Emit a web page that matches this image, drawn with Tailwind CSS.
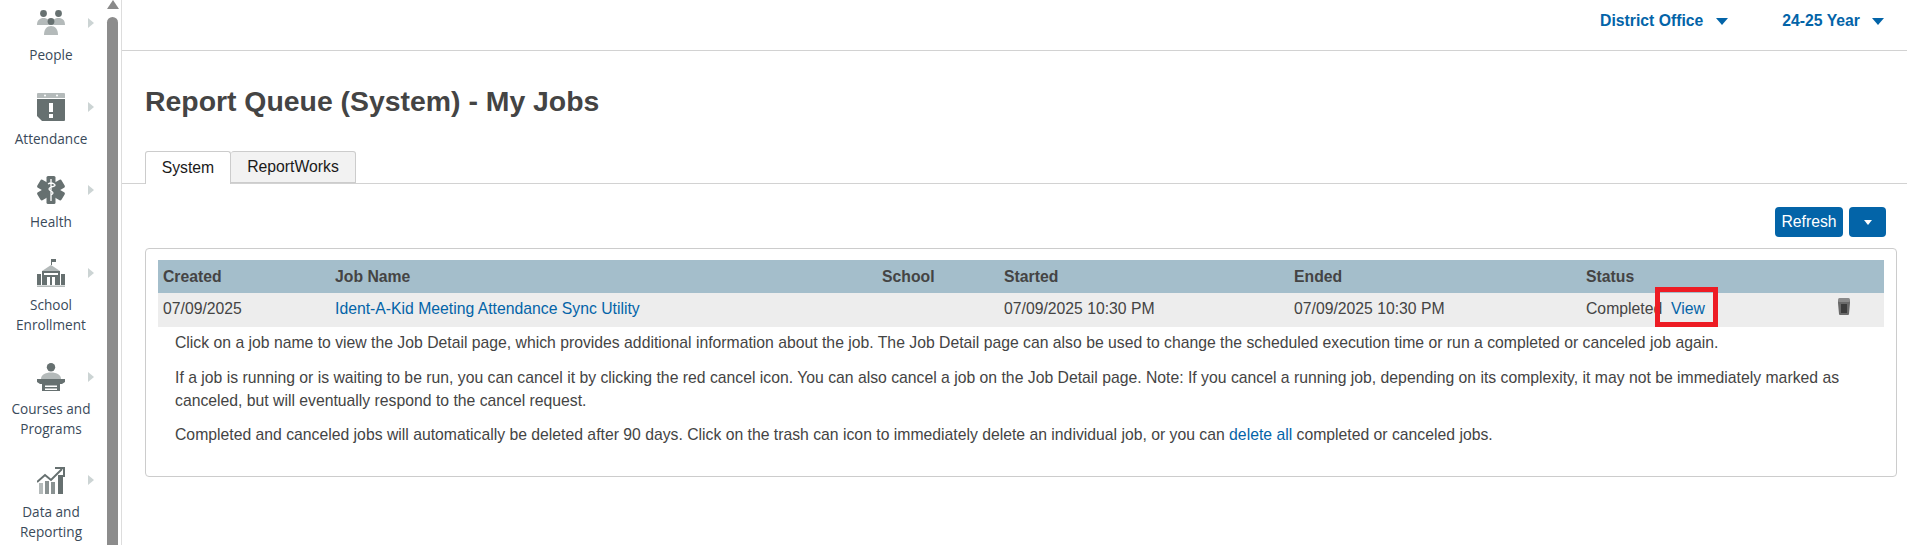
<!DOCTYPE html>
<html lang="en">
<head>
  <meta charset="UTF-8">
  <title>Report Queue (System) - My Jobs</title>
  <script src="https://cdn.jsdelivr.net/npm/@tailwindcss/browser@4"></script>
</head>
<body class="bg-white overflow-hidden font-['Liberation_Sans',sans-serif] text-[15.75px] text-[#444]">
  <div class="flex h-[545px] overflow-hidden">
    <!-- Sidebar -->
    <div class="w-[107px] shrink-0 overflow-hidden font-['Open_Sans',sans-serif] text-[13.6px] leading-[20px] text-[#3a4a5a] text-center">
      <div class="relative h-[83px] w-[102px] pt-[10px]">
        <svg class="mx-auto block" width="28" height="26" viewBox="0 0 28 26"><circle cx="6.500" cy="3.500" r="3.400" fill="#667070"/><circle cx="21.500" cy="3.500" r="3.400" fill="#667070"/><path d="M0 15c0-5 3-7 6.500-7s7 2 7 7zM14.500 15c0-5 3-7 7-7s6.500 2 6.500 7z" fill="#b4baba"/><circle cx="14" cy="11.500" r="3.400" fill="#667070"/><path d="M7 25c0-6 3-9 7-9s7 3 7 9z" fill="#b4baba"/></svg>
        <div class="mt-[9px]">People</div>
        <div class="absolute left-[88px] top-[18px] border-l-[6px] border-y-[5px] border-y-transparent border-l-[#ccd4d4]"></div>
      </div>
      <div class="relative h-[83px] w-[102px] pt-[10px]">
        <svg class="mx-auto block" width="28" height="28" viewBox="0 0 28 28"><path d="M0 1q0-1 1-1h26q1 0 1 1v4H0z" fill="#b4baba"/><path d="M0 6h28v21q0 1-1 1H5l-5-5z" fill="#667070"/><circle cx="8" cy="2.500" r="1" fill="#fff"/><circle cx="20" cy="2.500" r="1" fill="#fff"/><rect x="12" y="10" width="4" height="9" fill="#fff"/><rect x="12" y="21" width="4" height="4" fill="#fff"/></svg>
        <div class="mt-[8px]">Attendance</div>
        <div class="absolute left-[88px] top-[19px] border-l-[6px] border-y-[5px] border-y-transparent border-l-[#ccd4d4]"></div>
      </div>
      <div class="relative h-[83px] w-[102px] pt-[10px]">
        <svg class="mx-auto block" width="28" height="28" viewBox="0 0 28 28"><g fill="#667070"><rect x="9.500" y="0" width="9" height="28" rx="1.500"/><rect x="9.500" y="0" width="9" height="28" rx="1.500" transform="rotate(60 14 14)"/><rect x="9.500" y="0" width="9" height="28" rx="1.500" transform="rotate(120 14 14)"/></g><path d="M14 3v22M11 8q3-2 6 0t-3 3q-4 2 0 4t0 4" stroke="#fff" stroke-width="1.300" fill="none"/></svg>
        <div class="mt-[8px]">Health</div>
        <div class="absolute left-[88px] top-[19px] border-l-[6px] border-y-[5px] border-y-transparent border-l-[#ccd4d4]"></div>
      </div>
      <div class="relative h-[104px] w-[102px] pt-[10px]">
        <svg class="mx-auto block" width="28" height="28" viewBox="0 0 28 28"><path d="M14.500 0v6" stroke="#667070" fill="none"/><rect x="15" y="0" width="4" height="3" fill="#667070"/><path d="M5 12l9-6 9 6z" fill="#b4baba"/><rect x="5" y="12" width="18" height="14" fill="#667070"/><rect x="0" y="15" width="4" height="11" fill="#667070"/><rect x="24" y="15" width="4" height="11" fill="#667070"/><rect x="7" y="14" width="14" height="2" fill="#fff"/><rect x="10" y="18" width="3" height="8" fill="#fff"/><rect x="15" y="18" width="3" height="8" fill="#fff"/><rect x="0" y="26.500" width="28" height="1.500" fill="#b4baba"/></svg>
        <div class="mt-[8px]">School<br>Enrollment</div>
        <div class="absolute left-[88px] top-[19px] border-l-[6px] border-y-[5px] border-y-transparent border-l-[#ccd4d4]"></div>
      </div>
      <div class="relative h-[114px] w-[102px] pt-[10px]">
        <svg class="mx-auto block" width="28" height="28" viewBox="0 0 28 28"><circle cx="14" cy="4.200" r="4.200" fill="#667070"/><path d="M4 16c0-4 4-6.500 10-6.500s10 2.500 10 6.500z" fill="#b4baba"/><path d="M0 16h28v3l-3 2H3l-3-2z" fill="#667070"/><rect x="5" y="21" width="18" height="7" fill="#667070"/><rect x="8" y="22.500" width="12" height="1.500" fill="#fff"/><rect x="8" y="25.500" width="12" height="1.500" fill="#fff"/></svg>
        <div class="mt-[8px]">Courses and<br>Programs</div>
        <div class="absolute left-[88px] top-[19px] border-l-[6px] border-y-[5px] border-y-transparent border-l-[#ccd4d4]"></div>
      </div>
      <div class="relative w-[102px]">
        <svg class="mx-auto block" width="28" height="27" viewBox="0 0 28 27"><rect x="2" y="16" width="4" height="11" fill="#b4baba"/><rect x="8" y="14" width="4" height="13" fill="#8a9292"/><rect x="14" y="15" width="4" height="12" fill="#8a9292"/><rect x="21" y="8" width="5" height="19" fill="#667070"/><path d="M0 15l8-7 6 5L25 2" stroke="#667070" stroke-width="2" fill="none"/><path d="M18 1h9v9" stroke="#667070" stroke-width="2" fill="none"/></svg>
        <div class="mt-[8px]">Data and<br>Reporting</div>
        <div class="absolute left-[88px] top-[8px] border-l-[6px] border-y-[5px] border-y-transparent border-l-[#ccd4d4]"></div>
      </div>
    </div>

    <!-- Sidebar scrollbar -->
    <div class="w-[15px] shrink-0 bg-white relative border-r border-[#ddd]">
      <div class="absolute left-[-1px] top-[0px] w-[13px] flex justify-center"><div class="border-x-[6.500px] border-b-[9px] border-x-transparent border-b-[#8a8a8a]"></div></div>
      <div class="absolute left-[0px] top-[17px] bottom-0 w-[11px] bg-[#8c8c8c] rounded-t-[6px]"></div>
    </div>

    <!-- Main -->
    <div class="flex-1 min-w-0">
      <div class="h-[51px] border-b border-[#d2d2d2] flex justify-end items-center pb-[8px] pr-[23px] gap-[54px] font-bold text-[#0364a8]">
        <div class="flex items-center gap-[13px]">District Office <span class="border-x-[6px] border-t-[7px] border-x-transparent border-t-[#0364a8]"></span></div>
        <div class="flex items-center gap-[12px]">24-25 Year <span class="border-x-[6px] border-t-[7px] border-x-transparent border-t-[#0364a8]"></span></div>
      </div>

      <h1 class="pl-[23px] pt-[34px] pb-[1px] text-[28.4px] leading-[32px] font-bold text-[#444]">Report Queue (System) - My Jobs</h1>

      <div class="mt-[33px] h-[33px] border-b border-[#d2d2d2] pl-[23px] flex text-[#1a1a1a]">
        <div class="h-[33px] w-[86px] border border-b-0 border-[#ccc] bg-white rounded-t-[3px] flex items-center justify-center">System</div>
        <div class="h-[32px] w-[125px] border border-l-0 border-[#ccc] bg-[#f2f2f2] rounded-t-[3px] flex items-center justify-center">ReportWorks</div>
      </div>

      <div class="flex justify-end gap-[6px] pt-[23px] pr-[21px] text-white">
        <div class="h-[30px] w-[68px] rounded-[4px] bg-[#0364a8] flex items-center justify-center">Refresh</div>
        <div class="h-[30px] w-[37px] rounded-[4px] bg-[#0364a8] flex items-center justify-center"><span class="border-x-[4.500px] border-t-[5px] border-x-transparent border-t-white"></span></div>
      </div>

      <div class="ml-[23px] mr-[10px] mt-[11px] h-[229px] border border-[#ccc] rounded-[4px] px-[12px] pt-[11px]">
        <div class="grid grid-cols-[177px_547px_122px_290px_292px_1fr]">
          <div class="contents font-bold">
            <div class="h-[33px] bg-[#a4becb] pl-[5px] flex items-center">Created</div>
            <div class="h-[33px] bg-[#a4becb] flex items-center">Job Name</div>
            <div class="h-[33px] bg-[#a4becb] flex items-center">School</div>
            <div class="h-[33px] bg-[#a4becb] flex items-center">Started</div>
            <div class="h-[33px] bg-[#a4becb] flex items-center">Ended</div>
            <div class="h-[33px] bg-[#a4becb] flex items-center">Status</div>
          </div>
          <div class="h-[34px] bg-[#ededed] pl-[5px] pb-[2px] flex items-center">07/09/2025</div>
          <div class="h-[34px] bg-[#ededed] pb-[2px] flex items-center text-[#0364a8]">Ident-A-Kid Meeting Attendance Sync Utility</div>
          <div class="h-[34px] bg-[#ededed]"></div>
          <div class="h-[34px] bg-[#ededed] pb-[2px] flex items-center">07/09/2025 10:30 PM</div>
          <div class="h-[34px] bg-[#ededed] pb-[2px] flex items-center">07/09/2025 10:30 PM</div>
          <div class="h-[34px] bg-[#ededed] pb-[2px] flex items-center relative">
            Completed
            <span class="absolute left-[85px] text-[#0364a8]">View</span>
            <div class="absolute left-[69px] top-[-6px] w-[63px] h-[40px] border-[5px] border-[#ed1c24]"></div>
            <svg class="absolute left-[251px] top-[5px] blur-[0.5px]" width="14" height="17" viewBox="0 0 14 17"><path d="M1 3h12v2l-1 11q0 1-1 1H3q-1 0-1-1L1 5z" fill="#6a6a6a"/><rect x="4" y="6" width="6" height="9" fill="#3c3c3c"/><rect x="1" y="0" width="12" height="4" rx="1.500" fill="#8a8a8a"/></svg>
          </div>
        </div>
        <div class="pl-[17px] pr-[24px] pt-[4px] leading-[23px]">
          <p>Click on a job name to view the Job Detail page, which provides additional information about the job. The Job Detail page can also be used to change the scheduled execution time or run a completed or canceled job again.</p>
          <p class="mt-[11.500px]">If a job is running or is waiting to be run, you can cancel it by clicking the red cancel icon. You can also cancel a job on the Job Detail page. Note: If you cancel a running job, depending on its complexity, it may not be immediately marked as canceled, but will eventually respond to the cancel request.</p>
          <p class="mt-[11.500px]">Completed and canceled jobs will automatically be deleted after 90 days. Click on the trash can icon to immediately delete an individual job, or you can <span class="text-[#0364a8]">delete all</span> completed or canceled jobs.</p>
        </div>
      </div>
    </div>
  </div>
</body>
</html>
